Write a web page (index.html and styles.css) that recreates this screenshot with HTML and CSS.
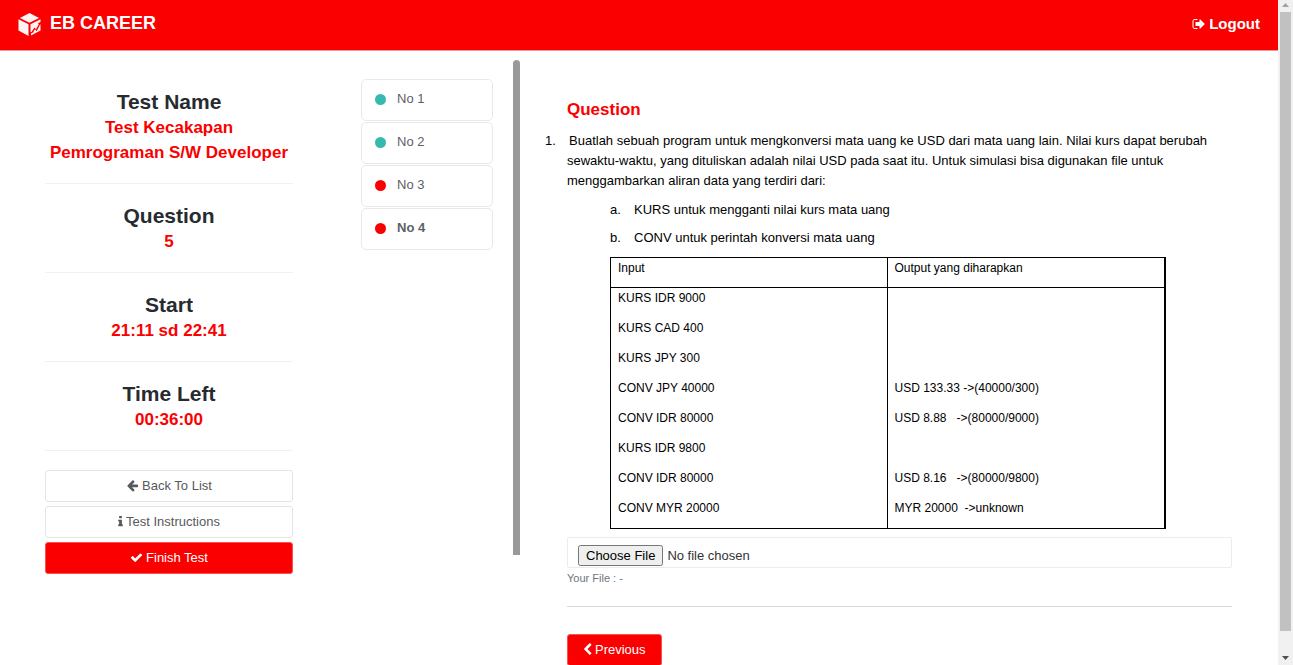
FILE: index.html
```html
<!DOCTYPE html>
<html lang="id">
<head>
<meta charset="utf-8">
<meta name="viewport" content="width=device-width, initial-scale=1">
<title>EB Career</title>
<link rel="stylesheet" href="styles.css">
</head>
<body>
<div class="page">
  <header class="topbar">
    <a class="brand" href="#">
      <svg class="brand-logo" viewBox="0 0 22 23" aria-hidden="true">
        <path d="M11 0 20.6 5 11 9.8 1.4 5z"/>
        <path d="M0 6.2 10 11.2V23L0 17.6z"/>
        <path d="M12 11.2 22 6.2V9l-2.500 1.300.8 1-2.800 5-1.500-1.800-3 4.500-1 .2z"/>
        <path d="M22 11v6.600L12.500 22.600v-2l2-1.200 2-3.200 1.700 2 3-6z"/>
      </svg>
      <span>EB CAREER</span>
    </a>
    <a class="logout" href="#">
      <svg class="icon" viewBox="0 0 1792 1792" aria-hidden="true"><path d="M704 1440q0 4 1 20t.5 26.500-3 23.500-10 19.500-20.500 6.500h-320q-119 0-203.500-84.500t-84.500-203.500v-704q0-119 84.500-203.500t203.500-84.500h320q13 0 22.500 9.500t9.500 22.500q0 4 1 20t.5 26.500-3 23.500-10 19.500-20.500 6.500h-320q-66 0-113 47t-47 113v704q0 66 47 113t113 47h312l11.500 1 11.500 3 8 5.500 7 9 2 13.500zm928-544q0 26-19 45l-544 544q-19 19-45 19t-45-19-19-45v-288h-448q-26 0-45-19t-19-45v-384q0-26 19-45t45-19h448v-288q0-26 19-45t45-19 45 19l544 544q19 19 19 45z"/></svg>
      <span>Logout</span>
    </a>
  </header>

  <div class="content">
    <aside class="summary">
      <section class="fact"><h2>Test Name</h2><p>Test Kecakapan Pemrograman S/W Developer</p></section>
      <section class="fact"><h2>Question</h2><p>5</p></section>
      <section class="fact"><h2>Start</h2><p>21:11 sd 22:41</p></section>
      <section class="fact"><h2>Time Left</h2><p>00:36:00</p></section>
      <div class="actions">
        <button class="btn" type="button">
          <svg class="icon" viewBox="0 0 1792 1792" aria-hidden="true"><path d="M1664 896v128q0 53-32.500 90.500t-84.500 37.500h-704l293 294q38 36 38 90t-38 90l-75 76q-37 37-90 37-52 0-91-37l-651-652q-37-37-37-90 0-52 37-91l651-650q38-38 91-38 52 0 90 38l75 74q38 38 38 91t-38 91l-293 293h704q52 0 84.500 37.500t32.500 90.500z"/></svg>
          Back To List
        </button>
        <button class="btn" type="button">
          <svg class="icon icon-slim" viewBox="576 0 640 1792" aria-hidden="true"><path d="M1216 1344v128q0 26-19 45t-45 19h-512q-26 0-45-19t-19-45v-128q0-26 19-45t45-19h64v-384h-64q-26 0-45-19t-19-45v-128q0-26 19-45t45-19h384q26 0 45 19t19 45v576h64q26 0 45 19t19 45zm-128-1152v192q0 26-19 45t-45 19h-256q-26 0-45-19t-19-45v-192q0-26 19-45t45-19h256q26 0 45 19t19 45z"/></svg>
          Test Instructions
        </button>
        <button class="btn btn-red" type="button">
          <svg class="icon" viewBox="0 0 1792 1792" aria-hidden="true"><path d="M1671 566q0 40-28 68l-724 724-136 136q-28 28-68 28t-68-28l-136-136-362-362q-28-28-28-68t28-68l136-136q28-28 68-28t68 28l294 295 656-657q28-28 68-28t68 28l136 136q28 28 28 68z"/></svg>
          Finish Test
        </button>
      </div>
    </aside>

    <nav class="numbers" aria-label="Questions">
      <a class="number done" href="#">No 1</a>
      <a class="number done" href="#">No 2</a>
      <a class="number" href="#">No 3</a>
      <a class="number current" href="#">No 4</a>
    </nav>

    <div class="divider"></div>

    <main class="question">
      <h1>Question</h1>
      <p class="stem"><span class="stem-no">1.</span>Buatlah sebuah program untuk mengkonversi mata uang ke USD dari mata uang lain. Nilai kurs dapat berubah sewaktu-waktu, yang dituliskan adalah nilai USD pada saat itu. Untuk simulasi bisa digunakan file untuk menggambarkan aliran data yang terdiri dari:</p>
      <div class="points">
        <p><span class="point-no">a.</span>KURS untuk mengganti nilai kurs mata uang</p>
        <p><span class="point-no">b.</span>CONV untuk perintah konversi mata uang</p>
      </div>
      <table class="sample">
        <thead><tr><th>Input</th><th>Output yang diharapkan</th></tr></thead>
        <tbody>
          <tr><td>KURS IDR 9000</td><td></td></tr>
          <tr><td>KURS CAD 400</td><td></td></tr>
          <tr><td>KURS JPY 300</td><td></td></tr>
          <tr><td>CONV JPY 40000</td><td>USD 133.33 -&gt;(40000/300)</td></tr>
          <tr><td>CONV IDR 80000</td><td>USD 8.88 &nbsp; -&gt;(80000/9000)</td></tr>
          <tr><td>KURS IDR 9800</td><td></td></tr>
          <tr><td>CONV IDR 80000</td><td>USD 8.16 &nbsp; -&gt;(80000/9800)</td></tr>
          <tr><td>CONV MYR 20000</td><td>MYR 20000 &nbsp;-&gt;unknown</td></tr>
        </tbody>
      </table>
      <input class="file" id="answer" type="file" aria-labelledby="answer-label">
      <label class="file-note" id="answer-label" for="answer">Your File : -</label>
      <hr class="rule">
      <button class="btn btn-red btn-prev" type="button">
        <svg class="icon icon-chevron" viewBox="300 0 1200 1792" aria-hidden="true"><path d="M1427 301l-531 531 531 531q19 19 19 45t-19 45l-166 166q-19 19-45 19t-45-19l-742-742q-19-19-19-45t19-45l742-742q19-19 45-19t45 19l166 166q19 19 19 45t-19 45z"/></svg>
        Previous
      </button>
    </main>
  </div>
</div>
<div class="scrollbar" aria-hidden="true">
  <svg class="scroll-arrow up" viewBox="0 0 15 12"><path d="M4 7 7.500 3 11 7z"/></svg>
  <div class="scroll-thumb"></div>
  <svg class="scroll-arrow" viewBox="0 0 15 12"><path d="M4 5h7L7.500 9z"/></svg>
</div>
</body>
</html>
```
FILE: styles.css
```css
* { box-sizing: border-box; }

body {
  display: grid;
  grid-template-columns: 1fr 15px;
  height: 100vh;
  margin: 0;
  overflow: hidden;
  background: #fff;
  color: #58595b;
  font: 13px/20px "Liberation Sans", Arial, sans-serif;
}

h1, h2, p { margin: 0; }
a { color: inherit; text-decoration: none; }

.page { min-width: 0; overflow: hidden; }

.topbar {
  display: flex;
  align-items: center;
  justify-content: space-between;
  height: 51px;
  padding: 0 18px;
  border-bottom: 1px solid #e59a9a;
  background: #fa0000;
  color: #fff;
  font-weight: bold;
}
.brand { display: flex; align-items: center; gap: 9px; font-size: 18px; padding-bottom: 4px; }
.brand-logo { width: 23px; height: 23px; margin-top: 2px; fill: #fff4f4; }
.logout { display: flex; align-items: center; gap: 3px; padding-bottom: 2px; font-size: 15px; }

.icon { width: 13px; height: 13px; margin-bottom: 1px; fill: currentColor; }
.logout .icon { width: 14px; height: 14px; }
.icon-slim { width: 5px; }
.icon-chevron { width: 9px; }

.content {
  display: grid;
  grid-template-columns: 316fr 152fr 7px 712fr;
  align-items: start;
  padding: 0 46px 0 45px;
}

.summary { padding: 19px 68px 0 0; text-align: center; }
.fact { padding: 19px 0 18px; border-bottom: 1px solid #f1f1f1; font-weight: bold; line-height: 25px; }
.fact h2 { color: #272b30; font-size: 21px; line-height: 26px; }
.fact p { padding: 0 2px; color: #fa0000; font-size: 17px; }
.actions { display: grid; gap: 4px; padding-top: 19px; }

.btn {
  display: flex;
  align-items: center;
  justify-content: center;
  gap: 3px;
  height: 32px;
  padding: 0 15px;
  border: 1px solid #e2e5e7;
  border-radius: 3px;
  background: #fff;
  color: #58595b;
  font: inherit;
}
.btn-red { border-color: #fb5050; background: #fa0000; color: #fff; }

.numbers { display: grid; gap: 1px; padding: 28px 20px 0 0; }
.number {
  display: flex;
  align-items: center;
  gap: 11px;
  height: 42px;
  padding: 0 13px 2px;
  border: 1px solid #ebe8eb;
  border-radius: 5px;
  color: #5d5f66;
}
.number::before { content: ""; width: 11px; height: 11px; border-radius: 50%; background: #fa0000; }
.done::before { background: #36baae; }
.current { font-weight: bold; }

.divider { height: 495px; margin-top: 9px; border-radius: 4px 4px 0 0; background: #999; }

.question { padding: 49px 0 0 47px; color: #000; }
.question h1 { color: #fa0000; font-size: 17px; line-height: 20px; }
.stem { margin-top: 11px; text-indent: -22px; }
.stem-no, .point-no { display: inline-block; width: 24px; text-indent: 0; }
.points { display: grid; gap: 8px; padding: 9px 0 0 43px; }

.sample {
  width: calc(100% - 109px);
  margin: 9px 66px 8px 43px;
  border: 1px solid #000;
  border-right-width: 2px;
  border-spacing: 0;
  table-layout: fixed;
  font-size: 12px;
  line-height: 20px;
}
.sample th, .sample td { height: 30px; padding: 0 7px; text-align: left; vertical-align: top; }
.sample th { border-bottom: 1px solid #000; font-weight: normal; }
.sample th:first-child, .sample td:first-child { border-right: 1px solid #000; }

.file {
  display: block;
  width: 100%;
  height: 31px;
  padding: 7px 10px;
  border: 1px solid #ececec;
  border-radius: 2px;
  color: #333;
  font: inherit;
}
.file-note { display: block; color: #6c757d; font-size: 11px; }
.rule { height: 1px; margin: 18px 0 27px; border: 0; background: #d8d8d8; }

.scrollbar { display: flex; flex-direction: column; background: #f1f1f1; padding: 0 0 2px; }
.scroll-thumb { flex: 1; margin: 0 2px 20px; background: #c1c1c1; }
.scroll-arrow { display: block; width: 15px; height: 12px; fill: #505050; }
.scroll-arrow.up { fill: #a3a3a3; }
```
